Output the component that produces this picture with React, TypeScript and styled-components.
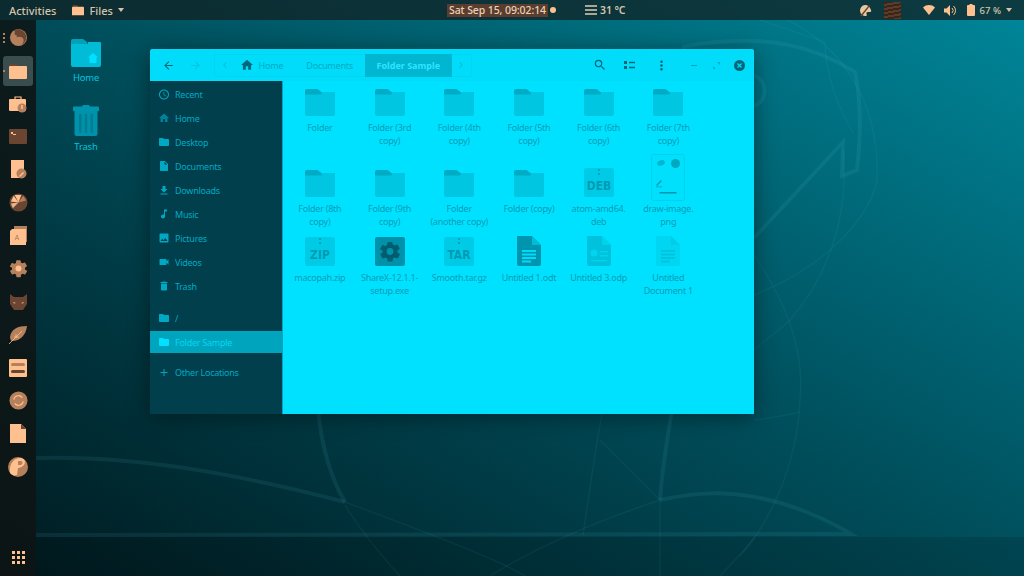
import React from 'react';
import styled, { createGlobalStyle } from 'styled-components';
import {
  MdAccessTime,
  MdAdd,
  MdArrowBack,
  MdArrowForward,
  MdChevronLeft,
  MdChevronRight,
  MdDelete,
  MdFileDownload,
  MdFolder,
  MdHome,
  MdImage,
  MdInsertDriveFile,
  MdMoreVert,
  MdMusicNote,
  MdSearch,
  MdVideocam,
} from 'react-icons/md';

const PEACH = '#ffc08f';
const BROWN = '#6a4632';
const TAN = '#b5805c';
const FONT = '"Noto Sans", "Open Sans", sans-serif';

const GlobalStyle = createGlobalStyle`
  html, body {
    margin: 0;
    padding: 0;
    height: 100%;
    overflow: hidden;
    font-family: ${FONT};
  }
`;

const Screen = styled.div`
  position: relative;
  width: 1024px;
  height: 576px;
  overflow: hidden;
  display: flex;
  flex-direction: column;
  background: linear-gradient(to bottom left, #00879a 0%, #004d5a 50%, #001a1f 100%);
`;

const Wallpaper = styled.svg`
  position: absolute;
  inset: 0;
  width: 1024px;
  height: 576px;
`;

const TopBar = styled.header`
  position: relative;
  height: 20px;
  flex: none;
  display: grid;
  grid-template-columns: 447px 1fr auto;
  align-items: center;
  background: rgba(16, 30, 32, 0.72);
  color: #d4c4ac;
  font-size: 10.5px;
  font-weight: 500;
`;

const BarGroup = styled.div`
  display: flex;
  align-items: center;
`;

const Activities = styled.span`
  margin-left: 9px;
  margin-right: 16px;
  font-size: 11px;
`;

const AppName = styled.span`
  margin-left: 5px;
  font-size: 11px;
`;

const Caret = styled.span`
  width: 0;
  height: 0;
  margin-left: 5px;
  border-left: 3.5px solid transparent;
  border-right: 3.5px solid transparent;
  border-top: 4px solid #d4c4ac;
`;

const Clock = styled.span`
  line-height: 13px;
  width: 101px;
  box-sizing: border-box;
  text-align: center;
  white-space: nowrap;
  letter-spacing: -0.1px;
  background: #5a3d2e;
  color: #e8d2b8;
`;

const ClockDot = styled.span`
  width: 6px;
  height: 6px;
  margin-left: 2px;
  border-radius: 50%;
  background: ${PEACH};
`;

const Temperature = styled.span`
  margin-left: 3px;
  font-weight: 600;
  letter-spacing: -0.1px;
`;

const WeatherSlot = styled.span`
  display: flex;
  margin-left: 29px;
`;

const TrayGroup = styled(BarGroup)`
  padding-right: 12px;
`;

const TrayThumb = styled.span`
  width: 17px;
  height: 17px;
  margin: 0 22px 0 12px;
  background: repeating-linear-gradient(170deg, #3a2518 0 2px, #5c3d2b 2px 4px);
`;

const TrayIcon = styled.span<{ $gap?: number }>`
  display: flex;
  margin-right: ${(p) => p.$gap ?? 0}px;
`;

const BatteryLevel = styled.span`
  font-size: 9.5px;
`;

const Main = styled.div`
  position: relative;
  flex: 1;
  display: flex;
  min-height: 0;
`;

const Dock = styled.nav`
  width: 36px;
  flex: none;
  display: flex;
  flex-direction: column;
  align-items: center;
  padding-top: 1px;
  box-sizing: border-box;
  background: rgba(14, 20, 20, 0.88);
`;

const DockItem = styled.div<{ $active?: boolean }>`
  position: relative;
  width: 30px;
  height: 33px;
  flex: none;
  display: flex;
  align-items: center;
  justify-content: center;
  border-radius: 3px;
  ${(p) => p.$active && 'background: rgba(140, 170, 170, 0.36); height: 30px; margin: 1.5px 0;'}
`;

const RunDots = styled.span<{ $count: number }>`
  position: absolute;
  left: -0.5px;
  top: 50%;
  width: 2px;
  height: ${(p) => p.$count * 4 - 2}px;
  transform: translateY(-50%);
  background: repeating-linear-gradient(${TAN} 0 2px, transparent 2px 4px);
`;

const AppGrid = styled(DockItem)`
  margin-top: auto;
  margin-bottom: 2px;
`;

const Desktop = styled.main`
  position: relative;
  flex: 1;
  display: flex;
  flex-direction: column;
  align-items: flex-start;
  padding: 13px 0 0 22px;
`;

const DesktopIcon = styled.div`
  width: 56px;
  height: 69px;
  display: flex;
  flex-direction: column;
  align-items: center;
  color: #00c4df;
  font-size: 9.5px;
  line-height: 13px;
  letter-spacing: -0.2px;
`;

const DesktopArt = styled.div`
  height: 34px;
  margin-bottom: 4px;
  flex: none;
  display: flex;
  align-items: flex-end;
`;

const Window = styled.section`
  position: absolute;
  left: 114px;
  top: 29px;
  width: 604px;
  height: 365px;
  display: flex;
  flex-direction: column;
  border-radius: 3px 3px 0 0;
  overflow: hidden;
  box-shadow: 0 3px 22px rgba(0, 0, 0, 0.42);
  background: #00e1ff;
`;

const Header = styled.div`
  height: 32px;
  flex: none;
  display: flex;
  align-items: center;
  padding-left: 9px;
  box-sizing: border-box;
  background: #00dcf9;
  color: #00677a;
`;

const NavButton = styled.span<{ $faint?: boolean }>`
  width: 18px;
  display: flex;
  justify-content: center;
  margin-right: 9px;
  color: ${(p) => (p.$faint ? '#00c8e3' : '#00677a')};
`;

const PathBar = styled.div`
  width: 258px;
  height: 23px;
  margin-left: 1px;
  display: flex;
  align-items: center;
  box-sizing: border-box;
  border: 1px solid #00d6f2;
  border-radius: 2px;
  color: #00abc5;
  font-size: 9px;
  letter-spacing: -0.2px;
`;

const PathEdge = styled.span`
  width: 20px;
  display: flex;
  justify-content: center;
  color: #00c0da;
`;

const Crumb = styled.span<{ $current?: boolean; $gap?: number }>`
  display: flex;
  align-items: center;
  gap: 4px;
  height: 23px;
  margin-left: ${(p) => p.$gap ?? 0}px;
  ${(p) =>
    p.$current &&
    `
    width: 89px;
    justify-content: center;
    background: #00b6d1;
    color: #2fe4ff;
    font-weight: 700;
    letter-spacing: 0;
  `}
`;

const HeaderTools = styled.div`
  margin-left: auto;
  display: flex;
  align-items: center;
  color: #00677a;
`;

const ToolButton = styled.span<{ $width: number }>`
  display: flex;
  justify-content: center;
  width: ${(p) => p.$width}px;
`;

const WindowBody = styled.div`
  flex: 1;
  display: flex;
  min-height: 0;
`;

const Sidebar = styled.aside`
  width: 133px;
  flex: none;
  padding-top: 1px;
  box-sizing: border-box;
  background: #003f4b;
  border-right: 1px solid #00a5bd;
  color: #00a9c3;
  font-size: 9px;
  letter-spacing: -0.25px;
`;

const SideRow = styled.div<{ $selected?: boolean; $gapTop?: number; $height?: number }>`
  height: ${(p) => p.$height ?? 24}px;
  margin-top: ${(p) => p.$gapTop ?? 0}px;
  display: flex;
  align-items: center;
  gap: 5px;
  padding-left: 8px;
  ${(p) => p.$selected && 'background: #00a4bc; color: #00d8f4;'}
`;

const SideIcon = styled.span`
  display: flex;
  width: 12px;
  justify-content: center;
`;

const FileGrid = styled.div`
  flex: 1;
  display: grid;
  grid-template-columns: repeat(6, 69.7px);
  grid-auto-rows: min-content;
  row-gap: 7px;
  align-content: start;
  padding: 4px 0 0 2px;
`;

const FileCell = styled.div`
  display: flex;
  flex-direction: column;
  align-items: center;
  text-align: center;
`;

const FileArt = styled.div<{ $tall?: boolean; $flush?: boolean }>`
  height: ${(p) => (p.$tall ? 48 : 36)}px;
  flex: none;
  display: flex;
  align-items: flex-end;
  justify-content: center;

  svg {
    margin-bottom: ${(p) => (p.$flush ? 1 : 5)}px;
  }
`;

const FileLabel = styled.div`
  width: 62px;
  min-height: 26px;
  color: #0a9db6;
  font-size: 9px;
  line-height: 13px;
  letter-spacing: -0.25px;
`;

const Folder = () => (
  <svg width="30" height="27" viewBox="0 0 30 27">
    <path d="M0 2a2 2 0 0 1 2-2h10.500l4 3H29a1 1 0 0 1 1 1v2H0z" fill="#00abc5" />
    <path d="M0 5.500h16.500L17 3h12a1 1 0 0 1 1 1v21a2 2 0 0 1-2 2H2a2 2 0 0 1-2-2z" fill="#00c6e1" />
  </svg>
);

const Archive = ({ kind }: { kind: string }) => (
  <svg width="30" height="29" viewBox="0 5 30 29">
    <rect x="0" y="5" width="30" height="29" rx="2" fill="#00cbe6" />
    <path d="M14 6h2v2h-2zM14 10h2v2h-2z" fill="#00a4bd" />
    <text x="15" y="27" textAnchor="middle" fontFamily='"DejaVu Sans Condensed", "DejaVu Sans", sans-serif' fontSize="12" fontWeight="700" fill="#009bb4">
      {kind}
    </text>
  </svg>
);

const Gear = ({ size, color, hole }: { size: number; color: string; hole: string }) => (
  <svg width={size} height={size} viewBox="0 0 24 24">
    <path
      fill={color}
      d="M19.4 13a7.5 7.5 0 0 0 0-2l2.1-1.6a.5.5 0 0 0 .1-.6l-2-3.5a.5.5 0 0 0-.6-.2l-2.5 1a7.3 7.3 0 0 0-1.7-1L14.4 3a.5.5 0 0 0-.5-.4h-4a.5.5 0 0 0-.5.4l-.4 2.6a7.3 7.3 0 0 0-1.7 1l-2.5-1a.5.5 0 0 0-.6.2l-2 3.5a.5.5 0 0 0 .1.6L4.6 11a7.5 7.5 0 0 0 0 2l-2.1 1.6a.5.5 0 0 0-.1.6l2 3.5c.1.2.4.3.6.2l2.5-1c.5.4 1.1.7 1.7 1l.4 2.6c0 .2.2.4.5.4h4c.3 0 .5-.2.5-.4l.4-2.6c.6-.3 1.2-.6 1.7-1l2.5 1c.2.1.5 0 .6-.2l2-3.5a.5.5 0 0 0-.1-.6z"
    />
    <circle cx="12" cy="12" r="3.4" fill={hole} />
  </svg>
);

const ExeIcon = () => (
  <svg width="30" height="29" viewBox="0 5 30 29">
    <rect x="0" y="5" width="30" height="29" rx="2" fill="#0092ab" />
    <path
      transform="translate(3 7.500)"
      fill="#005c6f"
      fillRule="evenodd"
      d="M19.4 13a7.5 7.5 0 0 0 0-2l2.1-1.6a.5.5 0 0 0 .1-.6l-2-3.5a.5.5 0 0 0-.6-.2l-2.5 1a7.3 7.3 0 0 0-1.7-1L14.4 3a.5.5 0 0 0-.5-.4h-4a.5.5 0 0 0-.5.4l-.4 2.6a7.3 7.3 0 0 0-1.7 1l-2.5-1a.5.5 0 0 0-.6.2l-2 3.5a.5.5 0 0 0 .1.6L4.6 11a7.5 7.5 0 0 0 0 2l-2.1 1.6a.5.5 0 0 0-.1.6l2 3.5c.1.2.4.3.6.2l2.5-1c.5.4 1.1.7 1.7 1l.4 2.6c0 .2.2.4.5.4h4c.3 0 .5-.2.5-.4l.4-2.6c.6-.3 1.2-.6 1.7-1l2.5 1c.2.1.5 0 .6-.2l2-3.5a.5.5 0 0 0-.1-.6zM12 15.400a3.400 3.400 0 1 1 0-6.800 3.400 3.400 0 0 1 0 6.800z"
    />
  </svg>
);

const DocIcon = ({ body, corner, line, slides }: { body: string; corner: string; line: string; slides?: boolean }) => (
  <svg width="24" height="30" viewBox="0 4 24 30">
    <path d="M1 4h14l9 9v19a2 2 0 0 1-2 2H2a2 2 0 0 1-2-2V5a1 1 0 0 1 1-1z" fill={body} />
    <path d="M15 4l9 9h-9z" fill={corner} />
    {slides ? (
      <>
        <circle cx="7" cy="21" r="3.5" fill={line} />
        <path d="M13 19h8v1.5h-8zM13 23h8v1.5h-8zM4 28h16v1.2H4z" fill={line} />
      </>
    ) : (
      <path d="M5 18h14v2H5zM5 21.5h14v2H5zM5 25h14v2H5zM5 28.5h9v2H5z" fill={line} />
    )}
  </svg>
);

const ImageThumb = () => (
  <svg width="34" height="47" viewBox="0 0 34 47">
    <rect x=".5" y=".5" width="33" height="46" rx="2" fill="#00dffc" stroke="#00d2ee" />
    <ellipse cx="10" cy="9" rx="4" ry="2.6" fill="#00b6d1" transform="rotate(-20 10 9)" />
    <circle cx="24.500" cy="9.500" r="4.500" fill="#00a8c2" />
    <path d="M5 31l5-5 1 1-5 5zM5 32.500h6v.8H5z" fill="#00a0b9" />
    <rect x="8.500" y="38" width="17" height="1.500" fill="#0096ae" />
  </svg>
);

type FileEntry = { name: string; art: React.ReactNode; tall?: boolean; flush?: boolean };

const folder = <Folder />;

const rows: FileEntry[][] = [
  [
    { name: 'Folder', art: folder },
    { name: 'Folder (3rd copy)', art: folder },
    { name: 'Folder (4th copy)', art: folder },
    { name: 'Folder (5th copy)', art: folder },
    { name: 'Folder (6th copy)', art: folder },
    { name: 'Folder (7th copy)', art: folder },
  ],
  [
    { name: 'Folder (8th copy)', art: folder, tall: true },
    { name: 'Folder (9th copy)', art: folder, tall: true },
    { name: 'Folder (another\u00a0copy)', art: folder, tall: true },
    { name: 'Folder (copy)', art: folder, tall: true },
    { name: 'atom-amd64.\u200bdeb', art: <Archive kind="DEB" />, tall: true },
    { name: 'draw-image.\u200bpng', art: <ImageThumb />, tall: true, flush: true },
  ],
  [
    { name: 'macopah.zip', art: <Archive kind="ZIP" /> },
    { name: 'ShareX-12.1.1-\u200bsetup.exe', art: <ExeIcon /> },
    { name: 'Smooth.tar.gz', art: <Archive kind="TAR" /> },
    { name: 'Untitled 1.odt', art: <DocIcon body="#0095ae" corner="#00bcd6" line="#00dcf8" /> },
    { name: 'Untitled 3.odp', art: <DocIcon body="#00c2dd" corner="#00d2ec" line="#00d4ef" slides /> },
    { name: 'Untitled Document 1', art: <DocIcon body="#00d6f2" corner="#00cde8" line="#00c4de" /> },
  ],
];

const sidePlaces = [
  { label: 'Recent', icon: <MdAccessTime size={15} /> },
  { label: 'Home', icon: <MdHome size={16} color="#00829a" /> },
  { label: 'Desktop', icon: <MdFolder size={16} /> },
  { label: 'Documents', icon: <MdInsertDriveFile size={16} /> },
  { label: 'Downloads', icon: <MdFileDownload size={17} /> },
  { label: 'Music', icon: <MdMusicNote size={16} /> },
  { label: 'Pictures', icon: <MdImage size={16} /> },
  { label: 'Videos', icon: <MdVideocam size={16} /> },
  { label: 'Trash', icon: <MdDelete size={16} /> },
];

const dockIcons: React.ReactNode[] = [
  <svg width="19" height="19" viewBox="0 0 20 20">
    <circle cx="10" cy="10" r="9" fill={TAN} />
    <path d="M6 2c4-2 10 0 12 6 1 4-1 8-5 10 3-3 3-6 1-8-2-1-5-1-6 0 1-2 0-3-2-3 0-2 0-3 0-5z" fill={BROWN} />
  </svg>,
  <svg width="18" height="18" viewBox="0 0 18 18">
    <path d="M1 2h7l1 2H1z" fill={BROWN} />
    <rect x="0" y="4" width="18" height="13" rx="1" fill={PEACH} />
  </svg>,
  <svg width="18" height="18" viewBox="0 0 18 18">
    <path d="M6 4V2h6v2" fill="none" stroke={PEACH} strokeWidth="1.200" />
    <rect x="0" y="4" width="17" height="12" rx="1" fill={PEACH} />
    <circle cx="13" cy="13" r="4.500" fill={TAN} />
    <rect x="12.200" y="10" width="1.600" height="4" fill={PEACH} />
  </svg>,
  <svg width="18" height="15" viewBox="0 0 18 15">
    <rect width="18" height="15" rx="1" fill={BROWN} />
    <path d="M2 3h2v2H2zM4 5h3v1H4z" fill={PEACH} />
  </svg>,
  <svg width="17" height="19" viewBox="0 0 17 19">
    <rect x="1" y="0" width="13" height="18" fill={PEACH} />
    <circle cx="11.500" cy="13.500" r="5" fill={TAN} />
    <path d="M9 16l4-4 1 1-4 4z" fill={PEACH} />
  </svg>,
  <svg width="19" height="19" viewBox="0 0 20 20">
    <circle cx="10" cy="10" r="9.500" fill={BROWN} />
    <path d="M10 10L6 2l7 0zM10 10L2 9l3-6z" fill={PEACH} />
    <path d="M10 10l8-2-3-5z" fill={TAN} />
    <path d="M10 10l-6 6-2-5z" fill="#e7b48c" />
  </svg>,
  <svg width="17" height="19" viewBox="0 0 17 19">
    <rect x="4" y="0" width="13" height="16" fill={TAN} />
    <path d="M2 3h14v16H0V5z" fill={PEACH} />
    <path d="M5 14l2-5 2 5M5.800 12.500h2.500" fill="none" stroke={TAN} strokeWidth=".8" />
  </svg>,
  <Gear size={21} color={TAN} hole={PEACH} />,
  <svg width="19" height="16" viewBox="0 0 19 16">
    <path d="M1 0l4 3h9l4-3v10l-4 6H5l-4-6z" fill={BROWN} />
    <path d="M4 8l3 1-2 .5zM15 8l-3 1 2 .5z" fill={PEACH} />
  </svg>,
  <svg width="20" height="20" viewBox="0 0 20 20">
    <path d="M19 1C10 1 3 4 2 12c0 2 1 4 2 4 8 0 14-6 15-15z" fill={TAN} />
    <path d="M1 19L14 6M6 12h5M8 9v4" stroke={PEACH} strokeWidth=".8" fill="none" />
  </svg>,
  <svg width="18" height="18" viewBox="0 0 18 18">
    <rect width="18" height="18" rx="1" fill={PEACH} />
    <rect x="2" y="4" width="14" height="3" rx="1.500" fill={TAN} />
    <rect x="2" y="11" width="14" height="3" rx="1.500" fill={BROWN} />
  </svg>,
  <svg width="19" height="19" viewBox="0 0 20 20">
    <circle cx="10" cy="10" r="9.500" fill={TAN} />
    <path d="M5 9a5 5 0 0 1 9-2M15 11a5 5 0 0 1-9 2" fill="none" stroke={PEACH} strokeWidth="1.200" />
  </svg>,
  <svg width="16" height="19" viewBox="0 0 16 19">
    <path d="M0 0h11l5 5v14H0z" fill={PEACH} />
    <path d="M11 0l5 5h-5z" fill={BROWN} />
  </svg>,
  <svg width="20" height="20" viewBox="0 0 20 20">
    <circle cx="10" cy="10" r="10" fill={TAN} />
    <path d="M2 16C1 10 4 1 12 1c5 0 6 4 4 7-2 2-4 3-6 3l-1 7c-3 1-5 0-7-2z" fill={PEACH} />
    <path d="M10 4h3c2 0 2 3 0 4h-3z" fill={TAN} />
  </svg>,
];

const FilesFolderIcon = () => (
  <svg width="12" height="12" viewBox="0 0 18 18">
    <path d="M1 2h7l1 2H1z" fill={BROWN} />
    <rect x="0" y="4" width="18" height="13" rx="1" fill={PEACH} />
  </svg>
);

const Backdrop = () => (
  <Wallpaper viewBox="0 0 1024 576">
    <rect x="0" y="537" width="1024" height="39" fill="rgba(0,0,0,.13)" />
    <g fill="none" stroke="#5fd6e6" strokeOpacity=".09">
      <g strokeWidth="4">
        <path d="M36 458C150 455 260 480 345 502" />
        <path d="M318 410C322 450 332 480 345 502" />
        <path d="M672 410C667 440 662 470 660 500" />
        <path d="M660 500C700 491 730 492 760 498S825 518 851 534L36 535" />
        <path d="M682 47C770 30 820 50 855 72C861 100 861 135 857 170L842 176L843 142L754 238" />
        <path d="M754 75C768 82 768 100 754 106" />
      </g>
      <g strokeWidth="1.500" strokeOpacity=".06">
        <path d="M754 255C785 300 805 350 800 400C798 450 780 510 740 556" />
        <path d="M787 20C840 45 880 100 877 180C870 215 830 265 754 295" />
        <path d="M760 20L825 42C826 80 840 110 853 133" />
        <path d="M843 150C850 220 825 280 790 320C780 330 765 340 754 350" />
        <path d="M754 420C770 418 785 416 800 412" />
        <path d="M345 505C360 530 385 560 400 576" />
        <path d="M345 502C420 530 500 560 525 576" />
        <path d="M490 576C540 545 600 520 660 500" />
        <path d="M583 535C590 490 595 450 602 414" />
        <path d="M660 500V576" />
        <path d="M755 537C745 550 730 565 720 576" />
        <path d="M660 500L600 440" />
      </g>
    </g>
  </Wallpaper>
);

const App = (): JSX.Element => {
  return (
    <Screen>
      <GlobalStyle />
      <Backdrop />
      <TopBar>
        <BarGroup>
          <Activities>Activities</Activities>
          <FilesFolderIcon />
          <AppName>Files</AppName>
          <Caret />
        </BarGroup>
        <BarGroup>
          <Clock>Sat Sep 15, 09:02:14</Clock>
          <ClockDot />
          <WeatherSlot>
            <svg width="12" height="10" viewBox="0 0 12 10">
              <path d="M0 0h12v2H0zM0 4h12v2H0zM0 8h12v2H0z" fill="#a8a896" />
            </svg>
          </WeatherSlot>
          <Temperature>31 °C</Temperature>
        </BarGroup>
        <TrayGroup>
          <svg width="13" height="13" viewBox="0 0 13 13">
            <path d="M6 1a5.500 5.500 0 1 0 1 11c1 0 1-1 .5-2-.5-1 0-2 1.500-2h2c1 0 1.500-1 1-2C11 3 9 1 6 1z" fill="#e8c8a0" />
            <path d="M1 12L10 1l1 1L3 12z" fill={BROWN} />
          </svg>
          <TrayThumb />
          <TrayIcon $gap={9}>
            <svg width="12" height="10" viewBox="0 0 12 10">
              <path d="M0 2.500C3-.8 9-.8 12 2.500L6 10z" fill={PEACH} />
            </svg>
          </TrayIcon>
          <TrayIcon $gap={11}>
            <svg width="12" height="11" viewBox="0 0 12 11">
              <path d="M0 3.500h2.500L6 0v11L2.500 7.500H0z" fill={PEACH} />
              <path d="M8 3a3.500 3.500 0 0 1 0 5M9.500 1a6 6 0 0 1 0 9" fill="none" stroke={PEACH} />
            </svg>
          </TrayIcon>
          <TrayIcon $gap={5}>
            <svg width="8" height="12" viewBox="0 0 8 12">
              <path d="M2.500 0h3v1H7a1 1 0 0 1 1 1v9a1 1 0 0 1-1 1H1a1 1 0 0 1-1-1V2a1 1 0 0 1 1-1h1.500z" fill={PEACH} />
            </svg>
          </TrayIcon>
          <BatteryLevel>67 %</BatteryLevel>
          <Caret />
        </TrayGroup>
      </TopBar>
      <Main>
        <Dock>
          {dockIcons.map((icon, index) => (
            <DockItem key={index} $active={index === 1}>
              {index < 2 && <RunDots $count={index === 0 ? 3 : 1} />}
              {icon}
            </DockItem>
          ))}
          <AppGrid>
            <svg width="13" height="13" viewBox="0 0 13 13" fill={PEACH}>
              <path d="M0 0h3v3H0zM5 0h3v3H5zM10 0h3v3h-3zM0 5h3v3H0zM5 5h3v3H5zM10 5h3v3h-3zM0 10h3v3H0zM5 10h3v3H5zM10 10h3v3h-3z" />
            </svg>
          </AppGrid>
        </Dock>
        <Desktop>
          <DesktopIcon>
            <DesktopArt>
              <svg width="30" height="28" viewBox="0 0 30 28">
                <path d="M0 2a2 2 0 0 1 2-2h10l4 3v6H0z" fill="#00a2ba" />
                <path d="M0 5h16.500L17 3h12a1 1 0 0 1 1 1v22a2 2 0 0 1-2 2H2a2 2 0 0 1-2-2z" fill="#00bcd6" />
                <path d="M22 14l-5 4.500h1.500V24h7v-5.500H27z" fill="#00e1ff" />
              </svg>
            </DesktopArt>
            Home
          </DesktopIcon>
          <DesktopIcon>
            <DesktopArt>
              <svg width="26" height="31" viewBox="0 0 26 31">
                <path d="M10 0h6l1 1.500h8a1 1 0 0 1 1 1V6H0V2.500a1 1 0 0 1 1-1h8z" fill="#0095ae" />
                <path d="M1.500 6h23v23a2 2 0 0 1-2 2h-19a2 2 0 0 1-2-2z" fill="#0092aa" />
                <path d="M6 9h2.500v19H6zM11.700 9h2.500v19h-2.500zM17.500 9H20v19h-2.500z" fill="#007d93" />
              </svg>
            </DesktopArt>
            Trash
          </DesktopIcon>
          <Window>
            <Header>
              <NavButton>
                <MdArrowBack size={13} />
              </NavButton>
              <NavButton $faint>
                <MdArrowForward size={13} />
              </NavButton>
              <PathBar>
                <PathEdge>
                  <MdChevronLeft size={12} />
                </PathEdge>
                <Crumb $gap={6}>
                  <MdHome size={14} color="#00677a" />
                  Home
                </Crumb>
                <Crumb $gap={23}>Documents</Crumb>
                <Crumb $current $gap={12}>
                  Folder Sample
                </Crumb>
                <PathEdge>
                  <MdChevronRight size={12} />
                </PathEdge>
              </PathBar>
              <HeaderTools>
                <ToolButton $width={37}>
                  <MdSearch size={14} />
                </ToolButton>
                <ToolButton $width={23}>
                  <svg width="11" height="8" viewBox="0 0 11 8" fill="currentColor">
                    <path d="M0 0h3v3H0zM0 5h3v3H0zM5 .8h6v1.400H5zM5 5.800h6v1.400H5z" />
                  </svg>
                </ToolButton>
                <ToolButton $width={41}>
                  <MdMoreVert size={15} />
                </ToolButton>
                <ToolButton $width={23}>
                  <svg width="6" height="1" viewBox="0 0 6 1">
                    <path d="M0 0h6v1H0z" fill="#00a3bc" />
                  </svg>
                </ToolButton>
                <ToolButton $width={23}>
                  <svg width="7" height="7" viewBox="0 0 7 7" fill="#00b2cb">
                    <path d="M4 0h3v3zM0 4l3 3H0z" />
                  </svg>
                </ToolButton>
                <ToolButton $width={23}>
                  <svg width="11" height="11" viewBox="0 0 11 11">
                    <circle cx="5.500" cy="5.500" r="5.500" fill="#00677a" />
                    <path d="M3.500 3.500l4 4M7.500 3.500l-4 4" stroke="#00dcf9" strokeWidth="1.300" />
                  </svg>
                </ToolButton>
                <ToolButton $width={3} />
              </HeaderTools>
            </Header>
            <WindowBody>
              <Sidebar>
                {sidePlaces.map((place) => (
                  <SideRow key={place.label}>
                    <SideIcon>{place.icon}</SideIcon>
                    {place.label}
                  </SideRow>
                ))}
                <SideRow $gapTop={8}>
                  <SideIcon>
                    <MdFolder size={16} />
                  </SideIcon>
                  /
                </SideRow>
                <SideRow $selected $height={22} $gapTop={1}>
                  <SideIcon>
                    <MdFolder size={16} color="#00e1ff" />
                  </SideIcon>
                  Folder Sample
                </SideRow>
                <SideRow $gapTop={7}>
                  <SideIcon>
                    <MdAdd size={15} />
                  </SideIcon>
                  Other Locations
                </SideRow>
              </Sidebar>
              <FileGrid>
                {rows.flat().map((file) => (
                  <FileCell key={file.name}>
                    <FileArt $tall={file.tall} $flush={file.flush}>
                      {file.art}
                    </FileArt>
                    <FileLabel>{file.name}</FileLabel>
                  </FileCell>
                ))}
              </FileGrid>
            </WindowBody>
          </Window>
        </Desktop>
      </Main>
    </Screen>
  );
};

export default App;
